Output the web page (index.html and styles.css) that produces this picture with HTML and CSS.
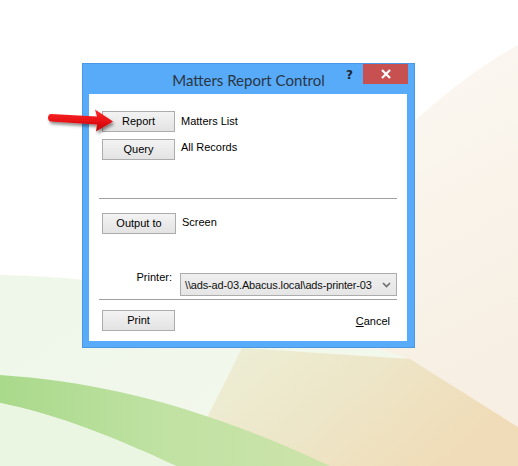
FILE: index.html
```html
<!DOCTYPE html>
<html lang="en">
<head>
    <meta charset="UTF-8">
    <meta name="viewport" content="width=device-width, initial-scale=1.0">
    <title>Matters Report Control</title>
    <link rel="stylesheet" href="styles.css">
</head>
<body>

    <svg class="wallpaper" width="518" height="466" viewBox="0 0 518 466">
        <defs>
            <linearGradient id="beige" x1="0" y1="0" x2="0.3" y2="1">
                <stop offset="0" stop-color="#fcf9f4"/>
                <stop offset="1" stop-color="#f7efe3"/>
            </linearGradient>
            <linearGradient id="sand" x1="0" y1="0" x2="1" y2="0.4">
                <stop offset="0" stop-color="#edf0d8"/>
                <stop offset="0.55" stop-color="#ede6c8"/>
                <stop offset="1" stop-color="#f0dcb8"/>
            </linearGradient>
            <linearGradient id="palegreen" x1="0" y1="0" x2="1" y2="0.5">
                <stop offset="0" stop-color="#eef7ea"/>
                <stop offset="1" stop-color="#f4f8ec"/>
            </linearGradient>
            <linearGradient id="band" x1="0" y1="0" x2="1" y2="0">
                <stop offset="0" stop-color="#a9d98b"/>
                <stop offset="0.5" stop-color="#c0e2a3"/>
                <stop offset="1" stop-color="#cde3a9"/>
            </linearGradient>
        </defs>
        <rect width="518" height="466" fill="#ffffff"/>
        <path d="M0,275 C100,277 200,292 300,322 L400,356 L518,427 L518,466 L0,466 Z" fill="url(#palegreen)"/>
        <path d="M518,45 C480,66 440,96 400,135 L300,322 L400,356 L518,427 Z" fill="url(#beige)"/>
        <path d="M242,348 L410,359 L518,427 L518,466 L183,466 Z" fill="url(#sand)"/>
        <path d="M0,375 C100,382 200,405 330,466 L176,466 C120,440 60,415 0,403 Z" fill="url(#band)"/>
        <path d="M0,403 C60,415 120,440 176,466 L0,466 Z" fill="#eaf6e2"/>
    </svg>

    <div class="window">
        <div class="titlebar">
            <span class="title">Matters Report Control</span>
            <div class="caption-buttons">
                <span class="help">?</span>
                <span class="close">
                    <svg width="10" height="10" viewBox="0 0 10 10">
                        <path d="M1 1 L9 9 M9 1 L1 9" stroke="#ffffff" stroke-width="2.2" fill="none"/>
                    </svg>
                </span>
            </div>
        </div>

        <div class="client">
            <div class="row first">
                <button class="btn">Report</button>
                <span class="value">Matters List</span>
            </div>
            <div class="row second">
                <button class="btn">Query</button>
                <span class="value">All Records</span>
            </div>

            <div class="sep sep-top"></div>

            <div class="row">
                <button class="btn wide">Output to</button>
                <span class="value">Screen</span>
            </div>

            <div class="printer-row">
                <label class="printer-label">Printer:</label>
                <div class="combo">
                    <span class="combo-text">\\ads-ad-03.Abacus.local\ads-printer-03</span>
                    <svg class="combo-arrow" width="9" height="6" viewBox="0 0 9 6">
                        <path d="M1 1 L4.5 4.5 L8 1" stroke="#6d6d6d" stroke-width="1.6" fill="none"/>
                    </svg>
                </div>
            </div>

            <div class="sep sep-bottom"></div>

            <div class="footer">
                <button class="btn">Print</button>
                <span class="cancel"><u>C</u>ancel</span>
            </div>
        </div>

        <svg class="arrow" width="74" height="30" viewBox="0 0 74 30">
            <defs>
                <filter id="shadow" x="-20%" y="-30%" width="150%" height="180%">
                    <feDropShadow dx="1.5" dy="2.5" stdDeviation="1.6" flood-color="#000" flood-opacity="0.45"/>
                </filter>
                <linearGradient id="red" x1="0" y1="0" x2="0" y2="1">
                    <stop offset="0" stop-color="#ff2a2a"/>
                    <stop offset="0.6" stop-color="#e30f12"/>
                    <stop offset="1" stop-color="#b80a0c"/>
                </linearGradient>
            </defs>
            <path filter="url(#shadow)" fill="url(#red)"
                  d="M6,6 L52,8.5 L50,1.5 L68,13.5 L51,23.5 L52,16.5 L6,13.5 C2,13.3 2,6.2 6,6 Z"/>
        </svg>
    </div>

</body>
</html>
```

FILE: styles.css
```css
body {
    margin: 0;
    width: 518px;
    height: 466px;
    overflow: hidden;
    font-family: "Liberation Sans", Arial, sans-serif;
    font-size: 11px;
    color: #000;
}
.wallpaper {
    position: absolute;
    top: 0;
    left: 0;
    z-index: -1;
}
.window {
    position: relative;
    margin: 63px 0 0 82px;
    width: 333px;
    box-sizing: border-box;
    background-color: #58abf8;
    border: 1px solid #4a98e4;
    padding: 0 7px 6px 6px;
}
.titlebar {
    display: grid;
    grid-template-columns: 1fr auto 1fr;
    height: 30px;
    margin: 0 -7px 0 -6px;
}
.title {
    grid-column: 2;
    font-family: Lato, "Open Sans", sans-serif;
    font-size: 15px;
    color: #2a3644;
    line-height: 30px;
    padding-top: 1px;
}
.caption-buttons {
    grid-column: 3;
    justify-self: end;
    display: flex;
    align-items: flex-start;
    margin-right: 6px;
}
.help {
    font-family: "DejaVu Sans", sans-serif;
    font-weight: bold;
    font-size: 12px;
    color: #1c2530;
    margin: 4px 10px 0 0;
}
.close {
    width: 45px;
    height: 20px;
    background-color: #c75050;
    display: flex;
    align-items: center;
    justify-content: center;
}
.client {
    background-color: #fff;
    height: 247px;
    box-sizing: border-box;
    padding: 17px 10px 0 13px;
    display: flex;
    flex-direction: column;
}
.row {
    display: flex;
    align-items: flex-start;
    gap: 6px;
    margin-bottom: 7px;
}
.btn {
    width: 73px;
    height: 21px;
    padding: 0;
    margin: 0;
    font-family: "Liberation Sans", Arial, sans-serif;
    font-size: 11px;
    color: #000;
    background: linear-gradient(#f3f3f3, #e3e3e3);
    border: 1px solid #acacac;
    border-radius: 0;
    line-height: 19px;
}
.btn.wide {
    width: 74px;
}
.value {
    padding-top: 3px;
}
.first .value {
    padding-top: 4px;
}
.second .value {
    padding-top: 2px;
}
.sep {
    height: 1px;
    background-color: #a0a0a0;
    margin-left: -3px;
}
.sep-top {
    margin-top: 31px;
    margin-bottom: 14px;
}
.printer-row {
    display: flex;
    align-items: flex-start;
    gap: 8px;
    margin-top: 32px;
}
.printer-label {
    width: 70px;
    text-align: right;
    margin-top: -2px;
}
.combo {
    width: 217px;
    height: 23px;
    box-sizing: border-box;
    border: 1px solid #acacac;
    background: linear-gradient(#efefef, #e5e5e5);
    display: flex;
    align-items: center;
    padding: 0 5px 0 4px;
    gap: 3px;
}
.combo-text {
    flex: 1;
    white-space: nowrap;
    letter-spacing: -0.15px;
    color: #111;
}
.sep-bottom {
    margin-top: 3px;
}
.footer {
    display: flex;
    justify-content: space-between;
    align-items: center;
    margin-top: 10px;
    padding-right: 7px;
}
.cancel {
    color: #000;
}
.arrow {
    position: absolute;
    left: -38px;
    top: 44px;
}
```
